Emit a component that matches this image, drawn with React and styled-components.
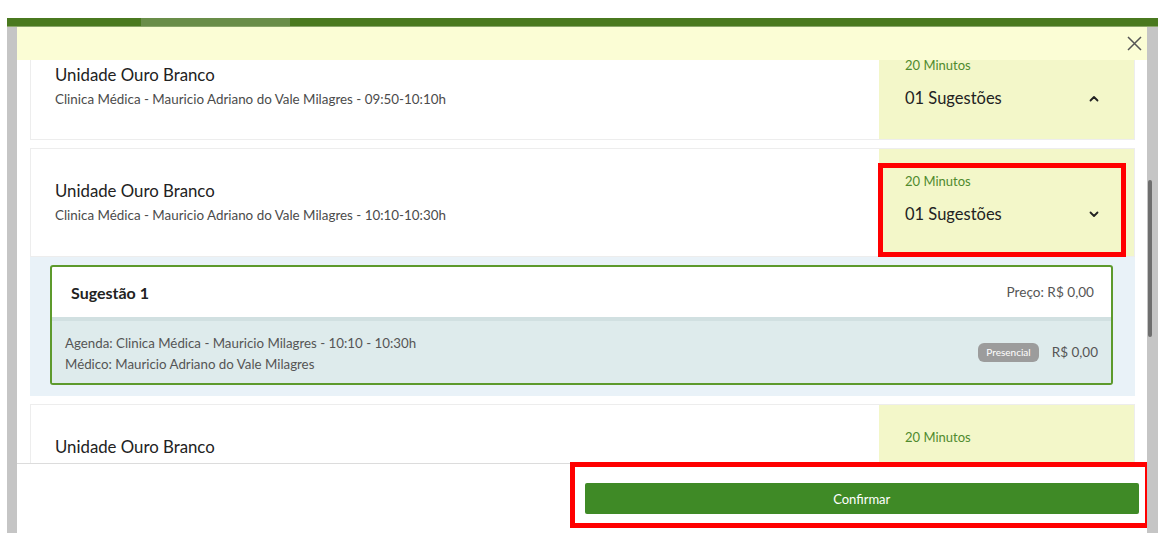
import React, { useLayoutEffect, useRef } from "react";
import styled, { createGlobalStyle } from "styled-components";

const GlobalStyle = createGlobalStyle`
  html, body { margin: 0; padding: 0; background: #ffffff; }
  body { font-family: Lato, "Open Sans", "Liberation Sans", sans-serif; overflow: hidden; }
  *, *::before, *::after { box-sizing: border-box; }
`;

const Page = styled.div`
  width: 1158px;
  height: 533px;
  padding: 18px 0 0 7px;
  display: flex;
  flex-direction: column;
`;

const TopBar = styled.div`
  height: 9px;
  flex-shrink: 0;
  display: flex;
  padding-left: 134px;
  background: #4a791f;
  border-bottom: 1px solid #8aa66a;
`;

const TopTab = styled.div`
  width: 149px;
  background: #698d48;
`;

const Stage = styled.div`
  flex: 1;
  display: flex;
  min-height: 0;
`;

const Backdrop = styled.div`
  width: ${(p) => p.$w}px;
  flex-shrink: 0;
  background: #c5c5c5;
  position: relative;
`;

const ScrollThumb = styled.div`
  position: absolute;
  left: 1px;
  top: 153px;
  width: 4px;
  height: 157px;
  border-radius: 2px;
  background: #6e6e6e;
`;

const Modal = styled.div`
  width: 1130px;
  height: 503px;
  display: flex;
  flex-direction: column;
  background: #ffffff;
`;

const Header = styled.div`
  height: 33px;
  flex-shrink: 0;
  display: flex;
  justify-content: flex-end;
  align-items: center;
  padding-right: 5px;
  background: #fbfdd5;
`;

const CloseButton = styled.button`
  width: 16px;
  height: 16px;
  padding: 0;
  border: none;
  background: transparent;
  display: flex;
  align-items: center;
  justify-content: center;
  cursor: pointer;
`;

const Body = styled.div`
  flex: 1;
  min-height: 0;
  overflow: hidden;
  padding: 0 12px 0 13px;
`;

const List = styled.div`
  display: flex;
  flex-direction: column;
  gap: 8px;
  padding-bottom: 20px;
`;

const Group = styled.div`
  display: flex;
  flex-direction: column;
`;

const Card = styled.div`
  height: ${(p) => p.$h}px;
  display: flex;
  background: #ffffff;
  border: 1px solid #ededed;
`;

const Info = styled.div`
  flex: 1;
  display: flex;
  flex-direction: column;
  justify-content: center;
  padding-left: 24px;
`;

const UnitName = styled.div`
  font-size: 16.8px;
  line-height: 20px;
  color: #222222;
`;

const Schedule = styled.div`
  margin-top: 5px;
  font-size: 13.4px;
  line-height: 18px;
  color: #4b4b4b;
`;

const Side = styled.div`
  position: relative;
  width: 255px;
  flex-shrink: 0;
  padding: 24px 35px 0 26px;
  background: #f3f7c9;
`;

const Duration = styled.div`
  font-size: 13px;
  line-height: 16px;
  color: #4f8a2e;
`;

const SuggestionRow = styled.div`
  margin-top: 15px;
  height: 20px;
  display: flex;
  align-items: center;
  justify-content: space-between;
  font-size: 16.5px;
  color: #222222;
`;

const Callout = styled.div`
  position: absolute;
  inset: ${(p) => p.$inset};
  border: 5px solid #ff0000;
  pointer-events: none;
`;

const Expansion = styled.div`
  padding: 8px 22px 11px 20px;
  background: #e9f2f8;
`;

const SuggestionBox = styled.div`
  border: 2px solid #5d9a2c;
  border-radius: 3px;
  background: #ffffff;
  overflow: hidden;
`;

const BoxHead = styled.div`
  height: 54px;
  display: flex;
  align-items: center;
  justify-content: space-between;
  padding: 0 17px 0 19px;
  border-bottom: 4px solid #d1e0e1;
`;

const BoxTitle = styled.div`
  font-size: 16px;
  font-weight: 700;
  color: #222222;
`;

const Price = styled.div`
  font-size: ${(p) => (p.$big ? 13.5 : 13.6)}px;
  color: #555555;
`;

const BoxBody = styled.div`
  height: 62px;
  display: flex;
  align-items: center;
  justify-content: space-between;
  padding: 0 13px;
  background: #deebec;
`;

const Details = styled.div`
  display: flex;
  flex-direction: column;
  padding-top: 4px;
`;

const DetailLine = styled.div`
  font-size: 13.3px;
  line-height: 21px;
  color: #555555;
`;

const PriceGroup = styled.div`
  display: flex;
  align-items: center;
  gap: 13px;
`;

const Badge = styled.span`
  height: 19px;
  display: inline-flex;
  align-items: center;
  padding: 0 8px;
  border-radius: 6px;
  background: #9c9c9c;
  color: #ffffff;
  font-size: 10px;
`;

const Footer = styled.div`
  height: 67px;
  flex-shrink: 0;
  display: grid;
  grid-template-columns: 1fr 1fr;
  column-gap: 5px;
  align-items: start;
  padding: 19px 8px 0;
  border-top: 1px solid #dcdcdc;
  background: #ffffff;
`;

const ButtonSlot = styled.div`
  position: relative;
  grid-column: 2;
`;

const ConfirmButton = styled.button`
  width: 100%;
  height: 31px;
  border: none;
  border-radius: 2px;
  background: #3f8a26;
  color: #ffffff;
  font-family: inherit;
  font-size: 13px;
  cursor: pointer;
`;

const Chevron = ({ up }) => (
  <svg width="10" height="7" viewBox="0 0 10 7" aria-hidden="true">
    <path
      d={up ? "M1.5 5.5 L5 2 L8.5 5.5" : "M1.5 1.5 L5 5 L8.5 1.5"}
      fill="none"
      stroke="#222"
      strokeWidth="1.8"
      strokeLinecap="round"
      strokeLinejoin="round"
    />
  </svg>
);

const CloseIcon = () => (
  <svg width="15" height="15" viewBox="0 0 15 15" aria-hidden="true">
    <path d="M1 1 L14 14 M14 1 L1 14" stroke="#555" strokeWidth="1.5" />
  </svg>
);

const slots = [
  { time: "09:50-10:10h", open: true, height: 108 },
  { time: "10:10-10:30h", open: false, height: 109, expanded: true, highlighted: true },
  { time: "10:30-10:50h", open: false, height: 109 },
];

function SlotCard({ slot }) {
  return (
    <Card $h={slot.height}>
      <Info>
        <UnitName>Unidade Ouro Branco</UnitName>
        <Schedule>Clinica Médica - Mauricio Adriano do Vale Milagres - {slot.time}</Schedule>
      </Info>
      <Side>
        <Duration>20 Minutos</Duration>
        <SuggestionRow>
          <span>01 Sugestões</span>
          <Chevron up={slot.open} />
        </SuggestionRow>
        {slot.highlighted && <Callout $inset="14px 8px -1px -1px" />}
      </Side>
    </Card>
  );
}

export default function App() {
  const bodyRef = useRef(null);

  useLayoutEffect(() => {
    if (bodyRef.current) bodyRef.current.scrollTop = 28;
  }, []);

  return (
    <>
      <GlobalStyle />
      <Page>
        <TopBar>
          <TopTab />
        </TopBar>
        <Stage>
          <Backdrop $w={10} />
          <Modal>
            <Header>
              <CloseButton aria-label="Fechar">
                <CloseIcon />
              </CloseButton>
            </Header>
            <Body ref={bodyRef}>
              <List>
                {slots.map((slot) => (
                  <Group key={slot.time}>
                    <SlotCard slot={slot} />
                    {slot.expanded && (
                      <Expansion>
                        <SuggestionBox>
                          <BoxHead>
                            <BoxTitle>Sugestão 1</BoxTitle>
                            <Price>Preço: R$ 0,00</Price>
                          </BoxHead>
                          <BoxBody>
                            <Details>
                              <DetailLine>Agenda: Clinica Médica - Mauricio Milagres - 10:10 - 10:30h</DetailLine>
                              <DetailLine>Médico: Mauricio Adriano do Vale Milagres</DetailLine>
                            </Details>
                            <PriceGroup>
                              <Badge>Presencial</Badge>
                              <Price $big>R$ 0,00</Price>
                            </PriceGroup>
                          </BoxBody>
                        </SuggestionBox>
                      </Expansion>
                    )}
                  </Group>
                ))}
              </List>
            </Body>
            <Footer>
              <ButtonSlot>
                <ConfirmButton>Confirmar</ConfirmButton>
                <Callout $inset="-21px -11px -14px -15px" />
              </ButtonSlot>
            </Footer>
          </Modal>
          <Backdrop $w={11}>
            <ScrollThumb />
          </Backdrop>
        </Stage>
      </Page>
    </>
  );
}
